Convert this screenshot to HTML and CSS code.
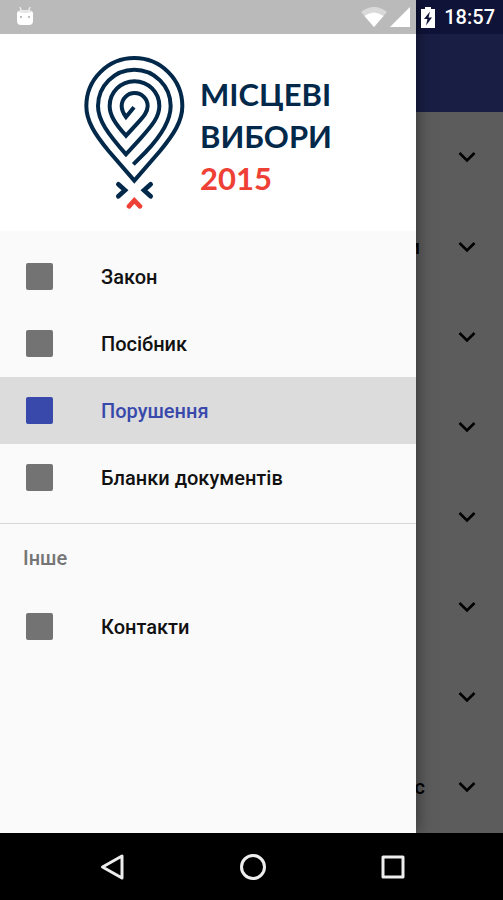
FILE: index.html
```
<!DOCTYPE html>
<html lang="uk">
  <head>
    <meta charset="utf-8" />
    <meta name="viewport" content="width=device-width, initial-scale=1" />
    <title>Місцеві вибори 2015</title>
    <link rel="stylesheet" href="styles.css">
  </head>
  <body>
    <svg width="0" height="0" class="defs">
      <symbol id="chevron" viewBox="0 0 18 12">
        <path d="M1.5 2 L9 9.5 L16.5 2" fill="none" stroke="currentColor" stroke-width="2.6" />
      </symbol>
    </svg>

    <div class="app">
      <header class="toolbar"></header>
      <ul class="list">
        <li><span class="title"></span><svg class="chevron"><use href="#chevron" /></svg></li>
        <li><span class="title">и </span><svg class="chevron"><use href="#chevron" /></svg></li>
        <li><span class="title"></span><svg class="chevron"><use href="#chevron" /></svg></li>
        <li><span class="title"></span><svg class="chevron"><use href="#chevron" /></svg></li>
        <li><span class="title"></span><svg class="chevron"><use href="#chevron" /></svg></li>
        <li><span class="title"></span><svg class="chevron"><use href="#chevron" /></svg></li>
        <li><span class="title"></span><svg class="chevron"><use href="#chevron" /></svg></li>
        <li><span class="title">с</span><svg class="chevron"><use href="#chevron" /></svg></li>
      </ul>

      <aside class="drawer">
        <div class="drawer-header">
          <svg class="pin" viewBox="30 30 306 462" fill="none" stroke="#02284a" stroke-width="12">
            <path d="M181 407 L104 318 C62 267 37 228 37 183 A144 144 0 0 1 325 183 C325 228 300 267 258 318 Z" />
            <path d="M178 358 L215 321 C264 270 290 225 290 183 A109 109 0 0 0 72 183 C72 225 100 264 156 328 L197 283 C236 240 256 215 256 183 A74.5 74.5 0 0 0 107 183 C107 210 122 234 156 272 L190 235 C210 213 221 200 221 183 A39 39 0 0 0 143 183 C143 196 148 205 156 216 L180 187" />
            <path d="M133 418 L153 436 L133 454 M230 418 L210 436 L230 454" stroke-width="14" stroke-linecap="round" />
            <path d="M165 484 L181 466 L198 484" stroke="#ef4036" stroke-width="14" stroke-linecap="round" />
          </svg>
          <div class="logo-text">
            <div>МІСЦЕВІ</div>
            <div>ВИБОРИ</div>
            <div class="year">2015</div>
          </div>
        </div>

        <nav>
          <div class="menu">
            <a href="#law"><span class="icon"></span>Закон</a>
            <a href="#guide"><span class="icon"></span>Посібник</a>
            <a href="#violations" class="active"><span class="icon"></span>Порушення</a>
            <a href="#forms"><span class="icon"></span>Бланки документів</a>
          </div>
          <div class="menu-group">
            <h2>Інше</h2>
            <a href="#contacts"><span class="icon"></span>Контакти</a>
          </div>
        </nav>
      </aside>

      <div class="status-bar">
        <svg class="droid" width="18" height="20" viewBox="0 0 18 20">
          <path d="M4 0 L5.5 4 M14 0 L12.5 4" stroke="#eee" stroke-width="1.3" />
          <path d="M1 6 Q1 3 9 3 Q17 3 17 6 V14 Q17 18 13 18 H5 Q1 18 1 14 Z" fill="#fff" />
          <path d="M2 5 Q2 3 9 3 Q16 3 16 5 Q9 7 2 5" fill="#e6e6e6" />
          <circle cx="5" cy="10" r="1" fill="#aaa" />
          <circle cx="13" cy="10" r="1" fill="#aaa" />
        </svg>
        <svg width="26" height="20" viewBox="0 0 26 20">
          <path d="M0 5 Q13 -5 26 5 L13 20 Z" fill="#d9d9d9" />
          <path d="M3.5 9 Q13 2 22.5 9 L13 20 Z" fill="#fff" />
        </svg>
        <svg width="20" height="20" viewBox="0 0 20 20">
          <path d="M20 0 V20 H0 Z" fill="#fff" />
        </svg>
        <svg class="battery" width="14" height="21" viewBox="0 0 14 21">
          <path d="M4 0 H10 V2 H14 V21 H0 V2 H4 Z" fill="#fff" />
          <path d="M9 4.5 L3 12 H6.5 L5 18.5 L11 10.5 H7.5 Z" fill="#0f1338" />
        </svg>
        <time>18:57</time>
      </div>
    </div>

    <footer class="system-nav">
      <button aria-label="Назад">
        <svg width="28" height="28" viewBox="0 0 28 28"><path d="M3.5 14 L23 3 V25 Z" /></svg>
      </button>
      <button aria-label="Додому">
        <svg width="28" height="28" viewBox="0 0 28 28"><circle cx="14" cy="14" r="11.5" /></svg>
      </button>
      <button aria-label="Огляд">
        <svg width="28" height="28" viewBox="0 0 28 28"><rect x="4" y="4" width="20" height="20" /></svg>
      </button>
    </footer>
  </body>
</html>
```
FILE: styles.css
```
* {
  box-sizing: border-box;
}
body {
  margin: 0;
  min-height: 100vh;
  display: flex;
  flex-direction: column;
  background: #000;
  font-family: Roboto, "Noto Sans", sans-serif;
  font-size: 20px;
  font-weight: 500;
}
.defs {
  position: absolute;
}
.app {
  flex: 1;
  position: relative;
  overflow: hidden;
  background: #5c5c5c;
}

/* screen behind the drawer */
.toolbar {
  height: 112px;
  background: #191e45;
  border-top: 34px solid #0f1338;
}
.list {
  list-style: none;
  margin: 0;
  padding: 0;
}
.list li {
  display: flex;
  align-items: center;
  height: 90px;
  padding-right: 27px;
}
.title {
  flex: 1;
  text-align: right;
  white-space: pre;
}
.chevron {
  width: 18px;
  height: 12px;
  margin-left: 33px;
}

/* drawer */
.drawer {
  position: absolute;
  top: 0;
  bottom: 0;
  left: 0;
  width: calc(100% - 87px);
  max-width: 416px;
  background: #fafafa;
  box-shadow: 0 0 16px rgba(0, 0, 0, 0.5);
}
.drawer-header {
  display: flex;
  justify-content: center;
  align-items: flex-start;
  gap: 14px;
  height: 231px;
  padding-top: 21px;
  background: #fff;
  border-top: 34px solid #bababa;
}
.pin {
  width: 102px;
  height: 154px;
}
.logo-text {
  padding-top: 18px;
  font-family: Lato, "Open Sans", sans-serif;
  font-size: 31px;
  font-weight: 700;
  line-height: 42px;
  color: #02284a;
}
.year {
  color: #ef4036;
}
.menu {
  padding: 12px 0;
  border-bottom: 1px solid #d6d6d6;
}
.drawer a {
  display: flex;
  align-items: center;
  gap: 48px;
  height: 67px;
  padding: 0 26px;
  color: #111;
  text-decoration: none;
}
.icon {
  width: 27px;
  height: 27px;
  border-radius: 2px;
  background: #737373;
}
.drawer a.active {
  background: #dcdcdc;
  color: #3949ab;
}
.active .icon {
  background: #3949ab;
}
.menu-group h2 {
  margin: 0;
  padding: 0 23px;
  font-size: 20px;
  font-weight: 500;
  line-height: 69px;
  color: #757575;
}

/* android bars */
.status-bar {
  position: absolute;
  top: 0;
  left: 0;
  right: 0;
  display: flex;
  align-items: center;
  gap: 3px;
  height: 34px;
  padding: 0 8px 0 16px;
  color: #fff;
}
.droid {
  margin-right: auto;
}
.battery {
  margin: 0 6px 0 8px;
}
.system-nav {
  display: grid;
  grid-template-columns: repeat(3, 1fr);
  height: 67px;
  padding: 0 40px 0 43px;
  background: #000;
}
.system-nav button {
  display: flex;
  align-items: center;
  justify-content: center;
  padding: 0;
  border: none;
  background: none;
}
.system-nav svg {
  fill: none;
  stroke: #eee;
  stroke-width: 3;
  stroke-linejoin: round;
}
```
